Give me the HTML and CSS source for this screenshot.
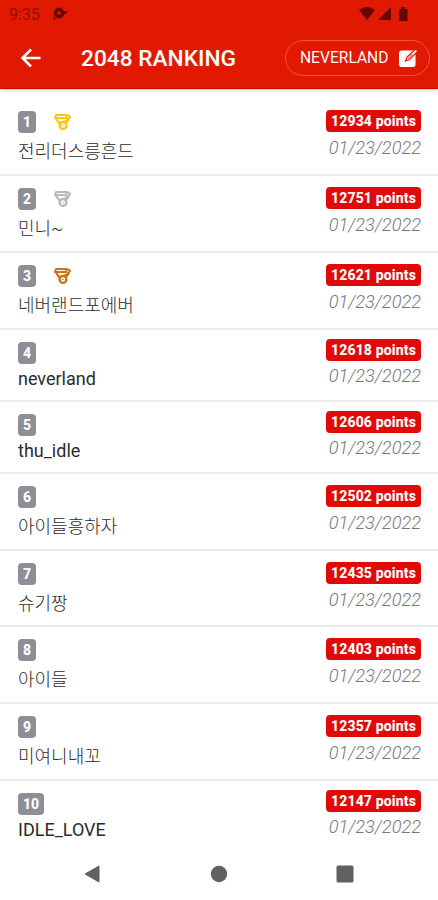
FILE: index.html
```
<!DOCTYPE html>
<html lang="ko">
<head>
    <meta charset="UTF-8">
    <title>2048 Ranking</title>
    <link rel="stylesheet" href="styles.css">
</head>

<body>
    <svg class="symbols">
        <symbol id="medal" viewBox="0 0 18 18">
            <path d="M2 2H13L12 5H1Z" fill="none" stroke="currentColor" stroke-width="2" stroke-linejoin="round"/>
            <path d="M1 4L5 10L12 8L16 4L14 2M15 6L12 10" fill="none" stroke="currentColor" stroke-width="2.2" stroke-linejoin="round"/>
            <circle cx="9" cy="12.5" r="3.4" fill="#fff" stroke="currentColor" stroke-width="2.4"/>
            <circle cx="9" cy="12.5" r="0.8" fill="currentColor"/>
        </symbol>
    </svg>

    <header>
        <div class="status">
            <span class="clock">9:35</span>
            <svg class="notice" width="16" height="14" viewBox="0 0 16 14">
                <circle cx="7" cy="6" r="3.6" fill="none" stroke="currentColor" stroke-width="3.6"/>
                <path d="M1 9.5l3.5 3H1zM12 4l3 .5v2l-3 1z" fill="currentColor"/>
            </svg>
            <svg class="signals" width="50" height="16" viewBox="0 0 50 16">
                <path d="M0 4q8-6 16 0L8 14zM19 14L32 1v13zM40 3h2V1h4v2h2.5v12H40z" fill="currentColor"/>
            </svg>
        </div>
        <div class="toolbar">
            <svg class="back" width="22" height="20" viewBox="0 0 22 20">
                <path d="M20.5 10H3M11 1.5L2.5 10l8.500 8.500" fill="none" stroke="#fff" stroke-width="2.5"/>
            </svg>
            <h1>2048 RANKING</h1>
            <button class="user">
                <span>NEVERLAND</span>
                <svg width="20" height="20" viewBox="0 0 20 20">
                    <rect x="0" y="2.5" width="16.5" height="16.5" rx="2.5" fill="#fff"/>
                    <path d="M6.500 13L8 9L16.500 1L19 3L10.500 11.500Z" fill="#fff" stroke="#e11900" stroke-width="1.2"/>
                    <path d="M8.500 11L13.500 6" stroke="#e11900"/>
                </svg>
            </button>
        </div>
    </header>

    <ul class="ranking">
        <li class="row tall">
            <div class="player">
                <div class="place"><span class="rank">1</span><svg class="medal gold"><use href="#medal"/></svg></div>
                <div class="name">전리더스릉흔드</div>
            </div>
            <div class="score"><span class="points">12934 points</span><span class="date">01/23/2022</span></div>
        </li>
        <li class="row tall">
            <div class="player">
                <div class="place"><span class="rank">2</span><svg class="medal silver"><use href="#medal"/></svg></div>
                <div class="name">민니~</div>
            </div>
            <div class="score"><span class="points">12751 points</span><span class="date">01/23/2022</span></div>
        </li>
        <li class="row tall">
            <div class="player">
                <div class="place"><span class="rank">3</span><svg class="medal bronze"><use href="#medal"/></svg></div>
                <div class="name">네버랜드포에버</div>
            </div>
            <div class="score"><span class="points">12621 points</span><span class="date">01/23/2022</span></div>
        </li>
        <li class="row">
            <div class="player">
                <div class="place"><span class="rank">4</span></div>
                <div class="name">neverland</div>
            </div>
            <div class="score"><span class="points">12618 points</span><span class="date">01/23/2022</span></div>
        </li>
        <li class="row">
            <div class="player">
                <div class="place"><span class="rank">5</span></div>
                <div class="name">thu_idle</div>
            </div>
            <div class="score"><span class="points">12606 points</span><span class="date">01/23/2022</span></div>
        </li>
        <li class="row tall">
            <div class="player">
                <div class="place"><span class="rank">6</span></div>
                <div class="name">아이들흥하자</div>
            </div>
            <div class="score"><span class="points">12502 points</span><span class="date">01/23/2022</span></div>
        </li>
        <li class="row tall">
            <div class="player">
                <div class="place"><span class="rank">7</span></div>
                <div class="name">슈기짱</div>
            </div>
            <div class="score"><span class="points">12435 points</span><span class="date">01/23/2022</span></div>
        </li>
        <li class="row tall">
            <div class="player">
                <div class="place"><span class="rank">8</span></div>
                <div class="name">아이들</div>
            </div>
            <div class="score"><span class="points">12403 points</span><span class="date">01/23/2022</span></div>
        </li>
        <li class="row tall">
            <div class="player">
                <div class="place"><span class="rank">9</span></div>
                <div class="name">미여니내꼬</div>
            </div>
            <div class="score"><span class="points">12357 points</span><span class="date">01/23/2022</span></div>
        </li>
        <li class="row">
            <div class="player">
                <div class="place"><span class="rank">10</span></div>
                <div class="name">IDLE_LOVE</div>
            </div>
            <div class="score"><span class="points">12147 points</span><span class="date">01/23/2022</span></div>
        </li>
    </ul>

    <nav>
        <svg width="18" height="20" viewBox="0 0 18 20"><path d="M16 2v16L2 10z" fill="#616161" stroke="#616161" stroke-linejoin="round"/></svg>
        <svg width="18" height="20" viewBox="0 0 18 20"><circle cx="9" cy="10" r="8.2" fill="#616161"/></svg>
        <svg width="18" height="20" viewBox="0 0 18 20"><rect x=".5" y="1.5" width="17" height="17" rx="1.5" fill="#616161"/></svg>
    </nav>
</body>
</html>
```
FILE: styles.css
```
* {
    box-sizing: border-box;
}

body {
    margin: 0;
    height: 900px;
    overflow: hidden;
    background: #fff;
    font-family: Roboto, "Noto Sans CJK KR", sans-serif;
}

.symbols {
    display: none;
}

header {
    height: 89px;
    background: #e11900;
    border-bottom: 1px solid #c90d08;
    box-shadow: 0 1px 3px rgba(0, 0, 0, 0.25);
}

.status {
    display: flex;
    align-items: center;
    height: 28px;
    padding: 0 29px 0 9px;
    color: #640800;
}

.clock {
    width: 43px;
    padding-top: 1px;
    font-size: 16px;
    color: #8f1205;
}

.signals {
    margin-left: auto;
}

.toolbar {
    display: flex;
    align-items: center;
    height: 60px;
    padding: 0 8px 0 20px;
}

h1 {
    margin: 1px 0 0 39px;
    font-size: 22.7px;
    line-height: 30px;
    font-weight: 500;
    color: #fff;
}

.user {
    display: flex;
    align-items: center;
    justify-content: space-between;
    width: 145px;
    height: 36px;
    margin-left: auto;
    padding: 0 10px 0 14px;
    border: 1px solid #ef5443;
    border-radius: 18px;
    background: none;
    color: #fff;
    font-family: inherit;
    font-size: 15.6px;
}

.ranking {
    margin: 0;
    padding: 10px 0 0;
    list-style: none;
}

.row {
    display: flex;
    justify-content: space-between;
    height: 72px;
    padding: 9px 17px 0 18px;
    border-bottom: 2px solid #ececec;
}

.row.tall {
    height: 76.9px;
    padding-top: 11px;
}

.row:last-child {
    border: none;
}

.player {
    padding-top: 3px;
}

.tall .player {
    padding-top: 1px;
}

.place {
    display: flex;
    align-items: center;
    height: 22px;
}

.rank {
    padding: 0 5px;
    border-radius: 4px;
    background: #8e8e96;
    color: #fff;
    font-size: 14px;
    line-height: 22px;
    font-weight: 800;
}

.medal {
    width: 18px;
    height: 18px;
    margin-left: 18px;
}

.gold {
    color: #f7c80c;
}

.silver {
    color: #b9b9b9;
}

.bronze {
    color: #c8751a;
}

.name {
    margin-top: 4px;
    font-size: 18px;
    line-height: 22px;
    color: #2b2b2b;
}

.tall .name {
    margin-top: 8px;
    font-weight: 300;
}

.score {
    display: flex;
    flex-direction: column;
    align-items: flex-end;
}

.points {
    width: 95px;
    border-radius: 4px;
    background: #e00b08;
    color: #fff;
    font-size: 14px;
    line-height: 22px;
    font-weight: 800;
    letter-spacing: 0.15px;
    text-align: center;
}

.date {
    margin-top: 4px;
    font-size: 18.2px;
    line-height: 22px;
    font-style: italic;
    font-weight: 300;
    color: #77777c;
}

.tall .date {
    margin-top: 5px;
}

nav {
    display: flex;
    justify-content: space-between;
    padding: 11px 84px 0 83px;
}
```
